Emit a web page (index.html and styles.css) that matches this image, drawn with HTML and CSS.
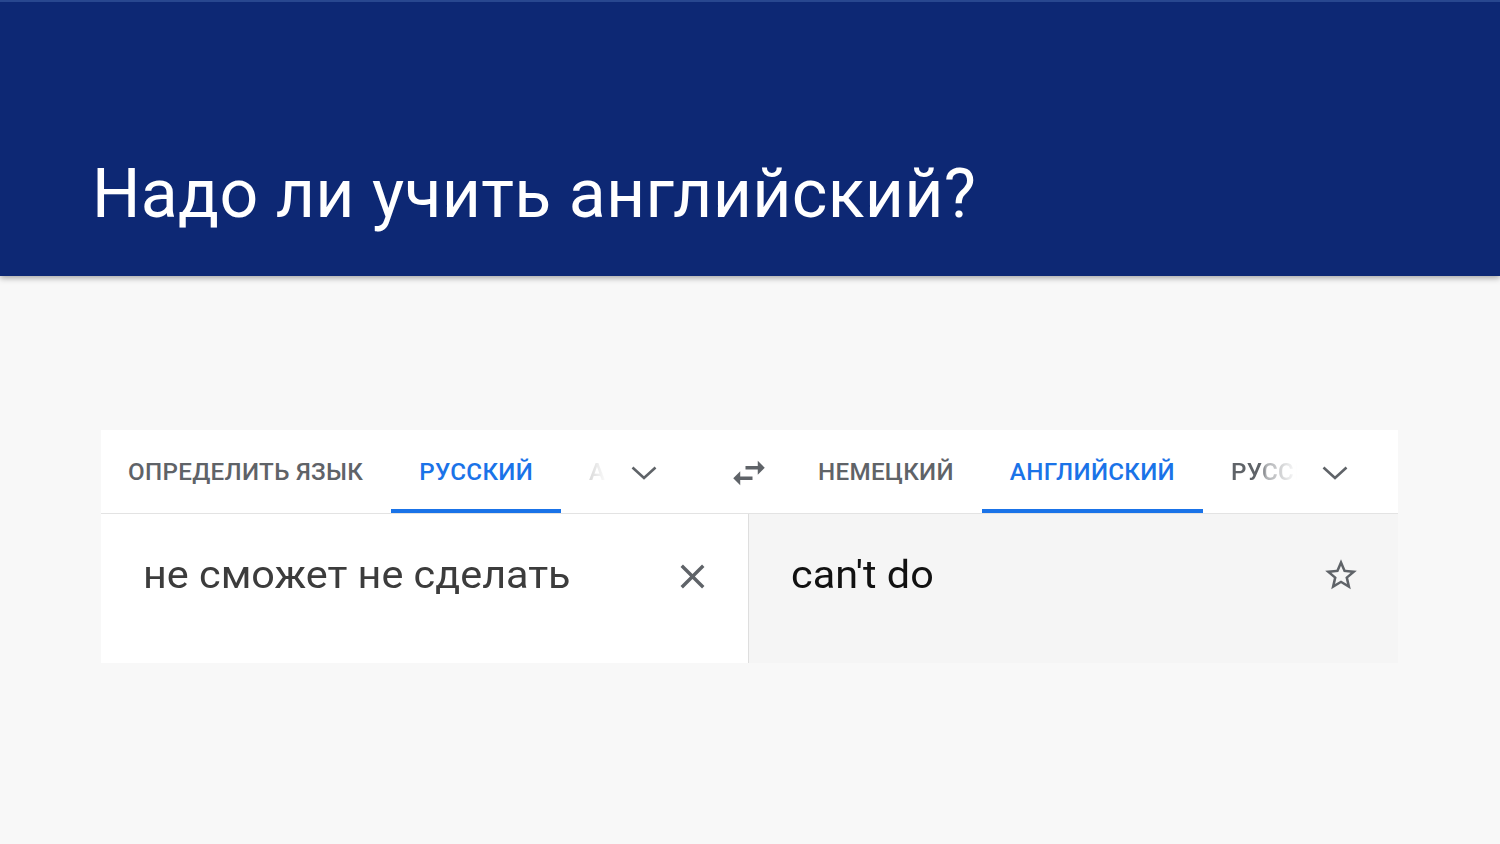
FILE: index.html
```html
<!DOCTYPE html>
<html lang="ru">
<head>
<meta charset="utf-8">
<link rel="stylesheet" href="styles.css">
</head>
<body>
<header class="header">
  <h1 class="title">Надо ли учить английский?</h1>
</header>
<main class="main">
  <section class="translator">
    <div class="tabbar">
      <div class="side side-left">
        <div class="tab tab-first">ОПРЕДЕЛИТЬ ЯЗЫК</div>
        <div class="tab tab-active">РУССКИЙ</div>
        <div class="tab tab-fade tab-fade-left">АНГЛИЙСКИЙ</div>
        <div class="chev">
          <svg width="26" height="14" viewBox="0 0 26 14"><polyline points="1.5,1.5 13,12 24.5,1.5" fill="none" stroke="#5f6368" stroke-width="2.6"/></svg>
        </div>
      </div>
      <div class="swap">
        <svg width="42" height="42" viewBox="0 0 24 24"><path fill="#5f6368" d="M6.99 11L3 15l3.99 4v-3H14v-2H6.99v-3zM21 9l-3.99-4v3H10v2h7.01v3L21 9z"/></svg>
      </div>
      <div class="side side-right">
        <div class="tab">НЕМЕЦКИЙ</div>
        <div class="tab tab-active">АНГЛИЙСКИЙ</div>
        <div class="tab tab-fade tab-fade-right">РУССКИЙ</div>
        <div class="chev">
          <svg width="26" height="14" viewBox="0 0 26 14"><polyline points="1.5,1.5 13,12 24.5,1.5" fill="none" stroke="#5f6368" stroke-width="2.6"/></svg>
        </div>
      </div>
    </div>
    <div class="panels">
      <div class="panel panel-source">
        <div class="text source-text">не сможет не сделать</div>
        <div class="icon-btn">
          <svg width="41" height="41" viewBox="0 0 24 24"><path fill="#5f6368" d="M19 6.41L17.59 5 12 10.59 6.41 5 5 6.41 10.59 12 5 17.59 6.41 19 12 13.41 17.59 19 19 17.59 13.41 12z"/></svg>
        </div>
      </div>
      <div class="panel panel-target">
        <div class="text target-text">can't do</div>
        <div class="icon-btn">
          <svg width="38" height="38" viewBox="0 0 24 24"><path fill="#5f6368" d="M22 9.24l-7.19-.62L12 2 9.19 8.63 2 9.24l5.46 4.73L5.82 21 12 17.27 18.18 21l-1.63-7.03L22 9.24zM12 15.4l-3.76 2.27 1-4.28-3.32-2.88 4.38-.38L12 6.1l1.71 4.04 4.38.38-3.32 2.88 1 4.28L12 15.4z"/></svg>
        </div>
      </div>
    </div>
  </section>
</main>
</body>
</html>
```
FILE: styles.css
```css
* { box-sizing: border-box; }
html, body { margin: 0; padding: 0; }
body {
  width: 1500px;
  height: 844px;
  overflow: hidden;
  background: #f8f8f8;
  font-family: Roboto, "Liberation Sans", Arial, sans-serif;
}
.header {
  height: 276px;
  background: #0d2874;
  border-top: 2px solid #28478f;
  box-shadow: 0 2px 6px rgba(0,0,0,0.35);
  padding: 147px 0 0 92px;
  position: relative;
  z-index: 1;
}
.title {
  margin: 0;
  font-weight: 400;
  font-size: 68px;
  line-height: 90px;
  color: #ffffff;
  letter-spacing: 0.3px;
}
.main {
  padding: 154px 0 0 101px;
}
.translator {
  width: 1297px;
  background: #ffffff;
}
.tabbar {
  display: flex;
  height: 84px;
  border-bottom: 1px solid #e3e3e3;
}
.side {
  display: flex;
  align-items: stretch;
}
.side-left { width: 618px; }
.side-right { padding-left: 11px; }
.tab {
  padding: 4px 28px 0;
  display: flex;
  align-items: center;
  font-size: 24.2px;
  font-weight: 500;
  color: #5f6368;
  letter-spacing: 0.3px;
  border-bottom: 4px solid transparent;
  white-space: nowrap;
}
.tab-first { padding-left: 27px; }
.tab-active {
  color: #1a73e8;
  border-bottom-color: #1a73e8;
}
.tab-fade {
  overflow: hidden;
  padding-right: 0;
}
.tab-fade-left {
  width: 58px;
  color: #c8c8c8;
  -webkit-mask-image: linear-gradient(to right, rgba(0,0,0,0.7) 28px, rgba(0,0,0,0) 46px);
  mask-image: linear-gradient(to right, rgba(0,0,0,0.7) 28px, rgba(0,0,0,0) 46px);
}
.tab-fade-right {
  width: 107px;
  -webkit-mask-image: linear-gradient(to right, #000 59px, rgba(0,0,0,0.5) 63px, rgba(0,0,0,0.28) 78px, rgba(0,0,0,0) 94px);
  mask-image: linear-gradient(to right, #000 59px, rgba(0,0,0,0.5) 63px, rgba(0,0,0,0.28) 78px, rgba(0,0,0,0) 94px);
}
.chev {
  display: flex;
  align-items: center;
  padding: 2px 0 0 12px;
}
.swap {
  width: 60px;
  display: flex;
  align-items: center;
  justify-content: center;
  padding-top: 2px;
}
.panels {
  display: flex;
  height: 149px;
}
.panel {
  display: flex;
  align-items: flex-start;
  justify-content: space-between;
}
.panel-source {
  width: 648px;
  background: #ffffff;
  border-right: 1px solid #dedede;
  padding: 38px 35px 0 42px;
}
.panel-target {
  flex: 1;
  background: #f5f5f5;
  padding: 38px 38px 0 42px;
}
.panel-source .icon-btn { padding-top: 4px; }
.panel-target .icon-btn { padding-top: 4px; }
.text {
  font-size: 38px;
  line-height: 46px;
  transform: scaleX(1.088);
  transform-origin: left center;
}
.source-text { color: #3c3c3c; }
.target-text { color: #111111; }
.icon-btn {
  display: flex;
}
```
